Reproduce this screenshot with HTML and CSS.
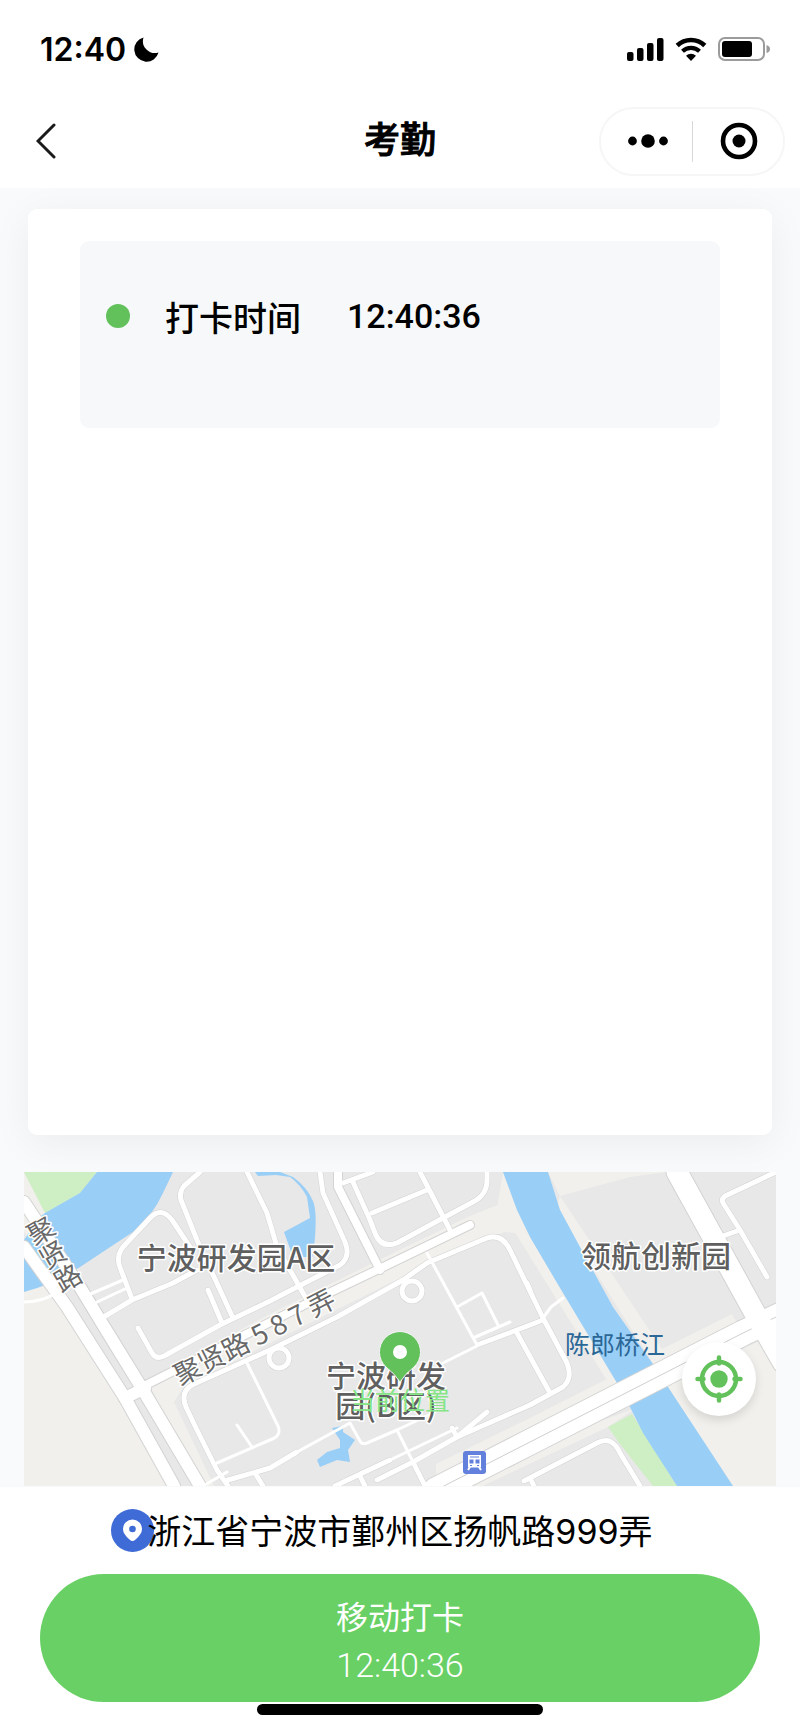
FILE: index.html
```html
<!DOCTYPE html>
<html lang="zh-CN">
<head>
    <meta charset="UTF-8">
    <meta name="viewport" content="width=device-width, initial-scale=1.0">
    <title>考勤</title>
    <link rel="stylesheet" href="styles.css">
</head>
<body>
    <header>
        <div class="status">
            <span class="clock">12:40</span>
            <svg class="moon" width="25" height="25" viewBox="0 0 25 25"><path d="M9.500 .5A12.300 12.300 0 1 0 24.500 15.500 12 12 0 0 1 9.500 .5z"/></svg>
            <div class="signals">
                <svg width="37" height="24" viewBox="0 0 37 24">
                    <rect x="0" y="15" width="6.500" height="9" rx="2"/>
                    <rect x="10" y="11" width="6.500" height="13" rx="2"/>
                    <rect x="20" y="6" width="6.500" height="18" rx="2"/>
                    <rect x="30" y="1" width="6.500" height="23" rx="2"/>
                </svg>
                <svg width="32" height="24" viewBox="0 0 32 24">
                    <path d="M2.200 8.500A20 20 0 0 1 29.800 8.500" fill="none" stroke="#000" stroke-width="4.500"/>
                    <path d="M7.500 14.300A12.500 12.500 0 0 1 24.500 14.300" fill="none" stroke="#000" stroke-width="4.200"/>
                    <path d="M16 24l-5-5.300a7.500 7.500 0 0 1 10 0z"/>
                </svg>
                <svg width="52" height="24" viewBox="0 0 52 24">
                    <rect x="1" y="1" width="45" height="22" rx="6" fill="none" stroke="#9b9b9b" stroke-width="2"/>
                    <rect x="4" y="4" width="30" height="16" rx="3"/>
                    <path d="M48.500 8q3.500 1 3.500 4t-3.500 4z" fill="#9b9b9b"/>
                </svg>
            </div>
        </div>
        <nav>
            <button class="back" type="button" aria-label="返回">
                <svg width="20" height="36" viewBox="0 0 20 36"><path d="M18 2L2 18l16 16" fill="none" stroke="#1a1a1a" stroke-width="3" stroke-linecap="round"/></svg>
            </button>
            <h1>考勤</h1>
            <div class="capsule">
                <button type="button" aria-label="更多">
                    <svg width="40" height="14" viewBox="0 0 40 14"><circle cx="4.500" cy="7" r="4.400"/><circle cx="20" cy="7" r="6.800"/><circle cx="35.500" cy="7" r="4.400"/></svg>
                </button>
                <button type="button" aria-label="关闭">
                    <svg width="38" height="38" viewBox="0 0 38 38"><circle cx="19" cy="19" r="16" fill="none" stroke="#000" stroke-width="4.600"/><circle cx="19" cy="19" r="6.500"/></svg>
                </button>
            </div>
        </nav>
    </header>

    <main>
        <section class="card">
            <div class="record">
                <span class="dot"></span>
                <span>打卡时间</span>
                <span class="time">12:40:36</span>
            </div>
        </section>

        <section class="map">
            <svg viewBox="0 0 752 314" role="img" aria-label="地图">
                <rect width="752" height="314" fill="#e8e8e8"/>

                <!-- open ground -->
                <g fill="#f1f0ec">
                    <path d="M0 118L30 112 150 314H0z"/>
                    <path d="M0 0L56 100 40 110 0 60z"/>
                    <path d="M524 0H643L606 5 536 24z"/>
                    <path d="M640 215L733 170 752 182V314H705z"/>
                    <path d="M123 208L246 142 355 88 446 44 486 28 502 62 480 60 380 104 160 214 150 230 190 314H176z"/>
                    <path d="M536 24l-4 14 100 158 84-40-8-14-70 35z"/>
                    <path d="M479 0l14 38 13 27 87 146-6 4-95-153-20-20z"/>
                    <path d="M600 208L412 304V292L506 246 585 206z"/>
                    <path d="M612 236L584 255 520 285 450 318H430L506 275z"/>
                </g>

                <!-- parks and water -->
                <path class="park" d="M0 0H73L56 21 21 41z"/>
                <path class="park" d="M584 255l24-13 45 72h-24l-33-42z"/>
                <g class="water">
                    <path d="M73 0H149L139 21Q128 45 109 60L56 95Q30 112 0 120V68L16 45 21 41 56 21z"/>
                    <path d="M231 0h25l13 5q14 10 20 24 4 10 2 36l-2 20h-20l-9-25 26-14-3-21q-6-12-17-20l-14-2-18 1z"/>
                    <path d="M308 256l11-2v6l12 8-7 10 2 12-13-2-17 7-3-7 10-8 13-4v-8z"/>
                    <path d="M479 0h45l12 38 20 37 33 60 42 60 13 20 65 99H653L619 261 606 235 593 211 539 121 506 65 493 38z"/>
                </g>

                <!-- roads: grey casing first, white fill on top -->
                <defs>
                    <g id="small">
                        <path d="M176 0L160 14q-5 6-3 14l16 40 36 78"/>
                        <path d="M108 127L97 98q-6-12 2-23l27-29q11-12 22 2l18 27"/>
                        <path d="M78 146l30-18 41-17 24-13"/>
                        <path d="M114 156l14 25q4 7 12 3l56-31 50-24 27-14 43-22q11-8 5-23L299 21l-3-21"/>
                        <path d="M184 118l14 33"/>
                        <path d="M223 0l20 41 10 34 26 46 6 10"/>
                        <path d="M319 11L349 0M329 10l17 38 5 13q6 16 22 10l46-25 30-16q14-7 14-22V0M348 41l55-23M396 0l30 58"/>
                        <path d="M204 314l-11-16-20-40-11-23q-6-15 6-22l78-35 67-33 66-37 24-17 60-25q15-5 23 12l33 68 24 45q6 15-4 24l-33 18-73 32-44 25-36 18"/>
                        <path d="M311 314l55-26M428 256l5 9M433 265l30-25"/>
                        <path d="M204 308l42-12 27-16"/>
                        <path d="M401 314l-12-24M336 304l5 10M231 301l8 13"/>
                        <path d="M453 173l53-20 13-5M493 161l33 60M506 118l-3-7"/>
                        <path d="M752 0L701 24q-4 3-2 7l17 27 27 47M696 65l20-7"/>
                        <path d="M500 309l73-38q15-8 23 10l20 33M506 306l4 8"/>
                        <circle cx="388" cy="119" r="10"/>
                        <circle cx="255" cy="186" r="10"/>
                    </g>
                    <g id="thin">
                        <path d="M64 123l35-15M71 131l32-15M0 130q18 0 32-9"/>
                        <path d="M193 291l53-23q12-4 8-14L223 191M213 253l15 22M179 314l24-14"/>
                        <path d="M273 280l53-29 10 18q2 4 7 2l30-13 16 32M366 288l67-32"/>
                        <path d="M373 258l38-18M419 191l34-17M403 81l50 92M433 135l25-14 16 32M449 166l37-16"/>
                        <path d="M519 146l8-11 12-9"/>
                    </g>
                    <g id="wide">
                        <path d="M0 75L43 135 101 226 150 314"/>
                        <path d="M0 30L56 115 76 148 119 218 176 314"/>
                        <path d="M101 226l20-10"/>
                    </g>
                    <g id="middle">
                        <path d="M120 214L286 130 353 98 446 53M314 0V15L356 98"/>
                    </g>
                    <path id="avenue" d="M653 0l80 145 26 45"/>
                    <path id="highway" d="M412 318L506 270 719 161l38-18"/>
                </defs>
                <g class="road casing">
                    <use href="#small" stroke-width="6"/>
                    <use href="#middle" stroke-width="10"/>
                    <use href="#wide" stroke-width="14"/>
                    <use href="#avenue" stroke-width="23"/>
                    <use href="#highway" stroke-width="27"/>
                </g>
                <g class="road">
                    <use href="#thin" stroke-width="3"/>
                    <use href="#small" stroke-width="5"/>
                    <use href="#middle" stroke-width="8"/>
                    <use href="#wide" stroke-width="12"/>
                    <use href="#highway" stroke-width="25"/>
                </g>
                <path class="lane" d="M412 318L506 270 719 161l33-16"/>
                <use class="road" href="#avenue" stroke-width="21"/>

                <!-- station -->
                <g transform="translate(439 279)">
                    <rect width="23" height="23" rx="3" fill="#6280dc"/>
                    <path d="M5 4h13v12.500H5z" fill="#fff"/>
                    <path d="M7 16l-2 3M16 16l2 3" stroke="#fff" stroke-width="2"/>
                    <path d="M6.500 8.500h4v4h-4zM12.500 8.500h4v4h-4zM7 5.500h9v1H7zM7 14h2v1H7zM14 14h2v1h-2z" fill="#6280dc"/>
                </g>

                <g class="place">
                    <text x="212" y="97" text-anchor="middle">宁波研发园A区</text>
                    <text x="632" y="95" text-anchor="middle">领航创新园</text>
                    <text x="362" y="215" text-anchor="middle">宁波研发</text>
                    <text x="362" y="245" text-anchor="middle">园(B区)</text>
                </g>
                <g class="street">
                    <text transform="translate(17 60) rotate(-30)" x="-13" y="9">聚</text>
                    <text transform="translate(29 84) rotate(-30)" x="-13" y="9">贤</text>
                    <text transform="translate(44 107) rotate(-30)" x="-13" y="9">路</text>
                    <text transform="translate(156 214) rotate(-27)">聚贤路 5 8 7 弄</text>
                </g>
                <text class="river" x="541" y="182">陈郎桥江</text>

                <!-- current position -->
                <path d="M376 210Q371 202 362 195A20.500 20.500 0 1 1 390 195Q381 202 376 210z" fill="#62c15b" stroke="#f4f4f4" stroke-width="1"/>
                <circle cx="376" cy="180" r="7" fill="#fff"/>
                <text class="here" x="376" y="238" text-anchor="middle">当前位置</text>
            </svg>
            <button class="locate" type="button" aria-label="定位">
                <svg width="48" height="48" viewBox="0 0 48 48">
                    <g fill="none" stroke="#62c15b" stroke-linecap="round">
                        <circle cx="24" cy="24" r="17" stroke-width="4.500"/>
                        <path d="M24 2.500v6M24 39.500v6M2.500 24h6M39.500 24h6" stroke-width="4.500"/>
                    </g>
                    <circle cx="24" cy="24" r="8.700" fill="#62c15b"/>
                </svg>
            </button>
        </section>
    </main>

    <footer>
        <p class="address">
            <svg width="43" height="43" viewBox="0 0 43 43">
                <circle cx="21.500" cy="21.500" r="21.500" fill="#3f6bd6"/>
                <path d="M21.500 32q-1.500 0-3-1.500Q12 25 12 20a9.500 9.500 0 0 1 19 0q0 5-6.500 10.500-1.500 1.500-3 1.500z" fill="#fff"/>
                <circle cx="21.500" cy="20" r="3.300" fill="#3f6bd6"/>
            </svg>
            浙江省宁波市鄞州区扬帆路999弄
        </p>
        <button class="punch" type="button">
            <span>移动打卡</span>
            <span class="now">12:40:36</span>
        </button>
        <div class="home"></div>
    </footer>
</body>
</html>
```
FILE: styles.css
```css
*{
    margin: 0;
    padding: 0;
    box-sizing: border-box;
}
body{
    display: flex;
    flex-direction: column;
    min-height: 100vh;
    background-color: #f9fafc;
    color: #000;
    font-family: Roboto, "Noto Sans CJK SC", sans-serif;
}
button{
    border: none;
    background: none;
    font: inherit;
    cursor: pointer;
}
svg{
    display: block;
}

/* top bar */
header{
    background-color: white;
}
.status{
    display: flex;
    align-items: center;
    height: 94px;
    padding: 4px 30px 0 40px;
}
.clock{
    font-family: Inter, sans-serif;
    font-size: 32px;
    font-weight: 600;
}
.moon{
    margin-left: 8px;
}
.signals{
    display: flex;
    gap: 11px;
    margin-left: auto;
}
nav{
    display: grid;
    grid-template-columns: 1fr auto 1fr;
    align-items: center;
    height: 94px;
    padding: 0 15px;
}
nav h1{
    font-size: 36px;
    font-weight: 500;
    line-height: 48px;
    -webkit-text-stroke: 1px #000;
}
.back{
    justify-self: start;
    margin-left: 21px;
}
.capsule{
    display: flex;
    justify-self: end;
    width: 186px;
    height: 69px;
    border: 2px solid #f6f6f6;
    border-radius: 35px;
}
.capsule button{
    display: flex;
    flex: 1;
    align-items: center;
    justify-content: center;
    padding-left: 2px;
}
.capsule button + button{
    position: relative;
}
.capsule button + button::before{
    content: "";
    position: absolute;
    left: 0;
    top: 12px;
    bottom: 12px;
    width: 1px;
    background-color: #d8d8d8;
}

/* records */
main{
    flex: 1;
    overflow: hidden;
}
.card{
    min-height: 926px;
    margin: 21px 28px 37px;
    padding: 32px 52px;
    background-color: white;
    border-radius: 9px;
    box-shadow: 0 8px 40px rgba(0, 0, 0, 0.06);
}
.record{
    display: flex;
    align-items: center;
    min-height: 187px;
    padding: 0 26px 37px;
    background-color: #f7f8fa;
    border-radius: 9px;
    font-size: 34px;
    font-weight: 500;
}
.dot{
    width: 24px;
    height: 24px;
    margin-right: 35px;
    border-radius: 50%;
    background-color: #62c15b;
}
.time{
    margin-left: 46px;
}

/* map */
.map{
    position: relative;
    margin: 0 24px;
}
.map > svg{
    width: 100%;
    height: auto;
}
.park{
    fill: #cdefc3;
}
.water{
    fill: #99cef6;
}
.road{
    fill: none;
    stroke: white;
    stroke-linecap: round;
    stroke-linejoin: round;
}
.casing{
    stroke: #d3d3d3;
}
.lane{
    fill: none;
    stroke: #cfcfcf;
}
.map text{
    font-family: "Noto Sans CJK SC", sans-serif;
    font-size: 25px;
    paint-order: stroke;
    stroke: white;
    stroke-width: 3px;
    stroke-linejoin: round;
}
.map .place text{
    font-size: 30px;
    font-weight: 500;
    fill: #5f5f5f;
}
.map .street text{
    font-size: 27px;
    fill: #686868;
}
.map .river{
    fill: #2b6797;
    stroke: none;
}
.map .here{
    fill: #86e586;
    stroke: none;
}
.locate{
    position: absolute;
    right: 20px;
    bottom: 70px;
    display: flex;
    align-items: center;
    justify-content: center;
    width: 74px;
    height: 74px;
    border-radius: 50%;
    background-color: white;
    box-shadow: 0 4px 10px rgba(0, 0, 0, 0.12);
}

/* bottom */
footer{
    position: relative;
    z-index: 0;
    display: flex;
    flex-direction: column;
    padding: 20px 40px 17px;
    background-color: white;
}
.address{
    position: relative;
    align-self: center;
    font-family: Inter, "Noto Sans CJK SC", sans-serif;
    font-size: 34px;
    line-height: 50px;
}
.address svg{
    position: absolute;
    top: 2px;
    right: 100%;
    z-index: -1;
    margin-right: -7px;
}
.punch{
    display: flex;
    flex-direction: column;
    align-items: center;
    justify-content: center;
    height: 128px;
    margin-top: 17px;
    padding-top: 7px;
    border-radius: 64px;
    background-color: #68d065;
    color: white;
    font-size: 32px;
    line-height: 47px;
}
.now{
    font-size: 34px;
    font-weight: 300;
}
.home{
    align-self: center;
    width: 286px;
    height: 11px;
    margin-top: 2px;
    border-radius: 6px;
    background-color: black;
}
```
